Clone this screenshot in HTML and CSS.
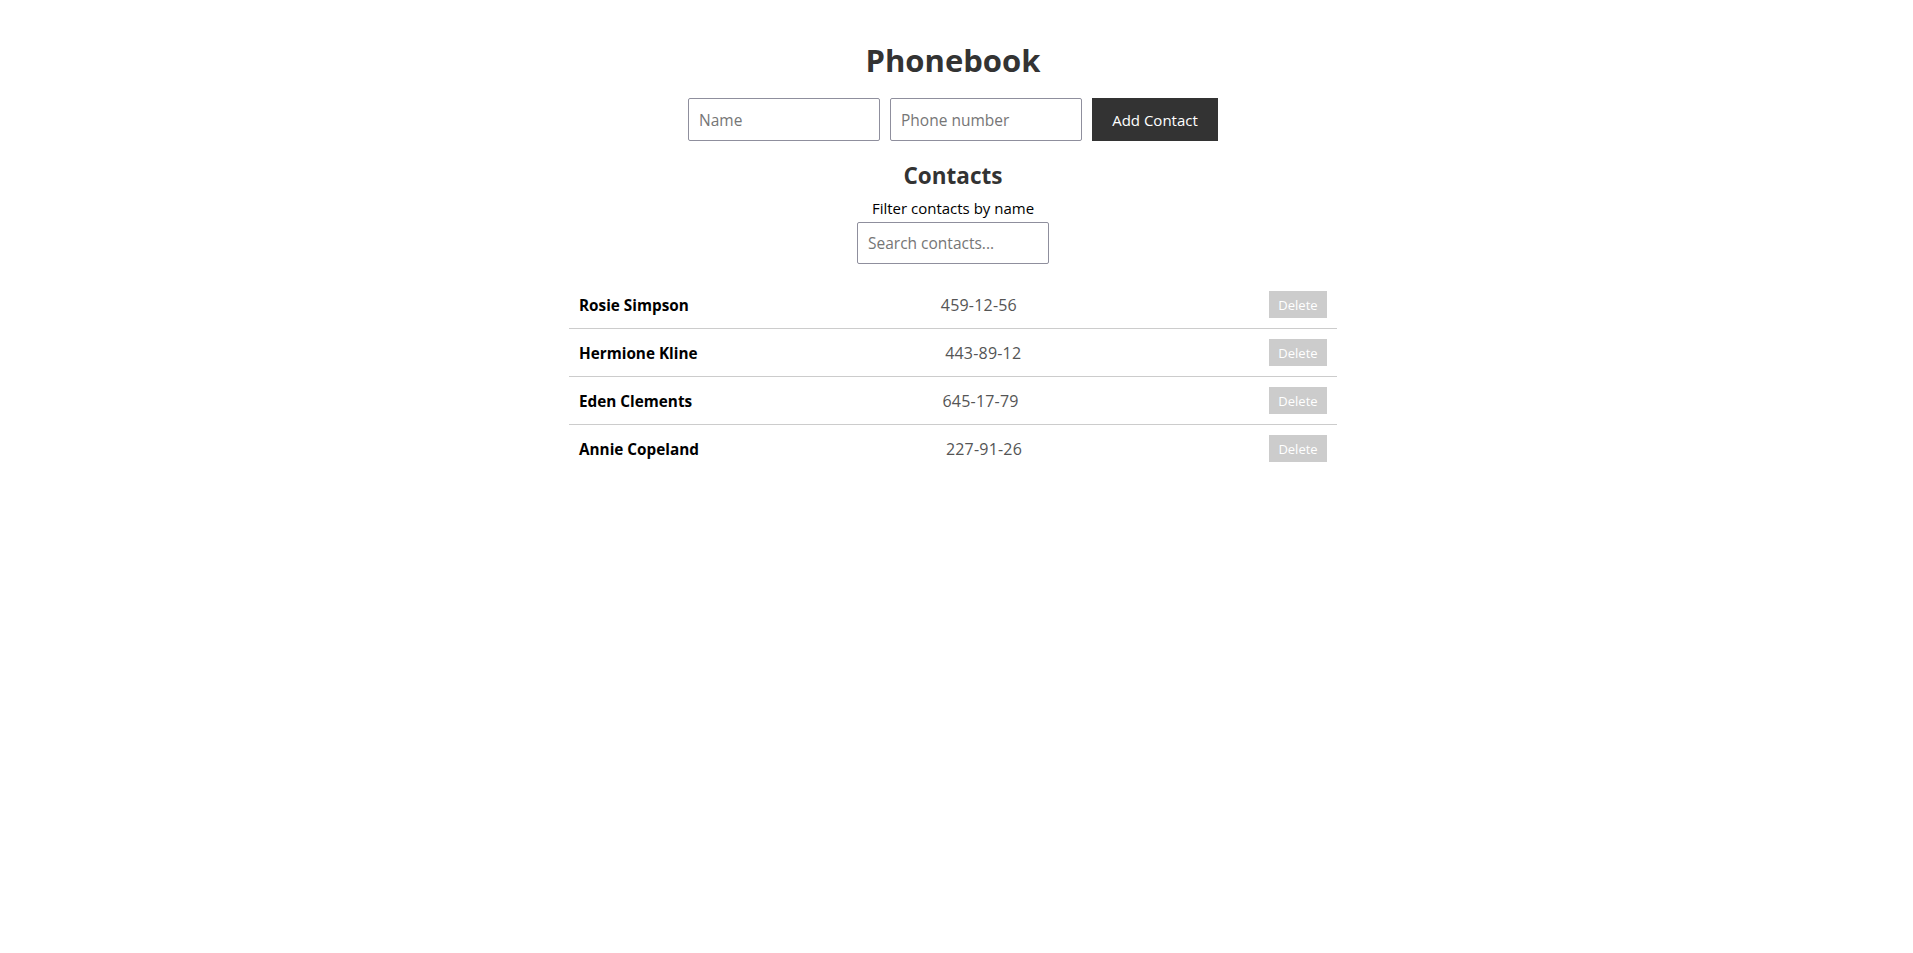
FILE: index.html
```html
<!DOCTYPE html>
<html lang="en">
<head>
<meta charset="utf-8">
<title>Phonebook</title>
<link rel="stylesheet" href="styles.css">
</head>
<body>
<main class="app">
  <h1 class="title">Phonebook</h1>
  <form class="add-form">
    <input class="field" type="text" placeholder="Name">
    <input class="field" type="text" placeholder="Phone number">
    <button class="add-btn" type="button">Add Contact</button>
  </form>
  <h2 class="subtitle">Contacts</h2>
  <label class="filter-label" for="search">Filter contacts by name</label>
  <input id="search" class="field search" type="text" placeholder="Search contacts...">
  <ul class="contacts">
    <li class="contact"><span class="contact-name">Rosie Simpson</span><span class="contact-phone">459-12-56</span><button class="delete-btn" type="button">Delete</button></li>
    <li class="contact"><span class="contact-name">Hermione Kline</span><span class="contact-phone">443-89-12</span><button class="delete-btn" type="button">Delete</button></li>
    <li class="contact"><span class="contact-name">Eden Clements</span><span class="contact-phone">645-17-79</span><button class="delete-btn" type="button">Delete</button></li>
    <li class="contact"><span class="contact-name">Annie Copeland</span><span class="contact-phone">227-91-26</span><button class="delete-btn" type="button">Delete</button></li>
  </ul>
</main>
</body>
</html>
```

FILE: styles.css
```css
* {
  box-sizing: border-box;
}

body {
  margin: 0;
  padding: 0 7px 0 0;
  background: #fff;
  font-family: "Open Sans", "Noto Sans", sans-serif;
  font-size: 16px;
  color: #000;
}

.app {
  width: 768px;
  margin: 0 auto;
  display: flex;
  flex-direction: column;
  align-items: center;
}

.title {
  margin: 40px 0 18px;
  font-size: 31px;
  line-height: 40px;
  font-weight: 700;
  color: #333;
}

.add-form {
  display: flex;
  gap: 10px;
  margin: 0;
}

.field {
  width: 192px;
  height: 43px;
  padding: 0 10px;
  border: 1px solid #8f8f9d;
  border-radius: 2px;
  font-family: inherit;
  font-size: 15.5px;
  color: #000;
  background: #fff;
}

.field::placeholder {
  color: #767676;
}

.add-btn {
  width: 126px;
  height: 43px;
  border: none;
  background: #333;
  color: #fff;
  font-family: inherit;
  font-size: 15px;
  padding: 0;
}

.subtitle {
  margin: 20px 0 7px;
  font-size: 22.5px;
  line-height: 30px;
  font-weight: 700;
  color: #333;
}

.filter-label {
  font-size: 15px;
  line-height: 20px;
  margin-bottom: 4px;
}

.search {
  height: 42px;
}

.contacts {
  list-style: none;
  margin: 17px 0 0;
  padding: 0;
  width: 100%;
}

.contact {
  display: flex;
  justify-content: space-between;
  align-items: center;
  padding: 10px;
  border-bottom: 1px solid #ccc;
}

.contact:last-child {
  border-bottom: none;
}

.contact-name {
  font-weight: 700;
  font-size: 15.3px;
  color: #000;
}

.contact-phone {
  font-size: 16px;
  letter-spacing: 0.2px;
  color: #555;
}

.delete-btn {
  width: 58px;
  height: 27px;
  padding: 0;
  border: none;
  background: #ccc;
  color: #fff;
  font-family: inherit;
  font-size: 13px;
}
```
